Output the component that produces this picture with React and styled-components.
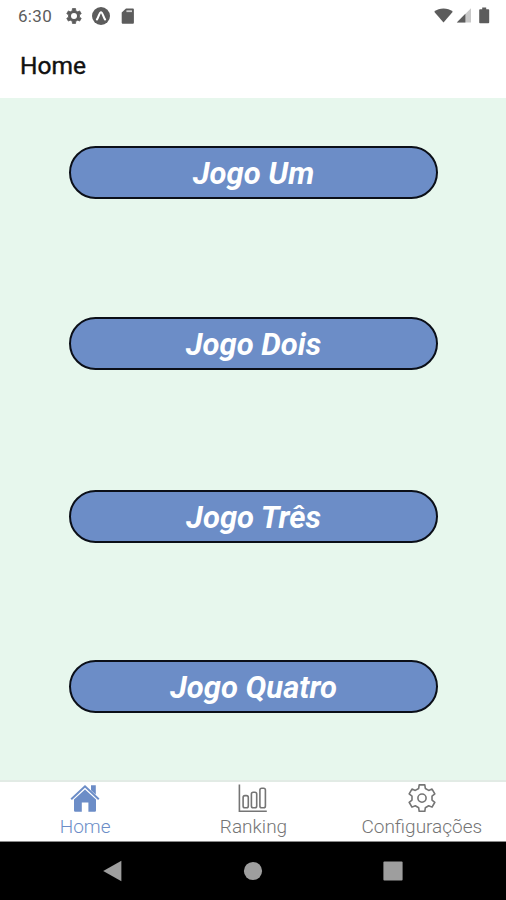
import React, { useState } from 'react';
import styled, { createGlobalStyle } from 'styled-components'

const games = [
  { name: "Jogo Um", gap: 0 },
  { name: "Jogo Dois", gap: 118 },
  { name: "Jogo Três", gap: 120 },
  { name: "Jogo Quatro", gap: 117 },
]

// outline of a six-toothed cog, first tooth pointing up
const cogPath = (cx, cy, outer, inner, tip, base) => {
  const points = []
  for (let i = 0; i < 6; i++) {
    const mid = -90 + i * 60;
    [[inner, -base], [outer, -tip], [outer, tip], [inner, base]].forEach(([r, shift]) => {
      const a = (mid + shift) * Math.PI / 180
      points.push(`${(cx + r * Math.cos(a)).toFixed(2)} ${(cy + r * Math.sin(a)).toFixed(2)}`)
    })
  }
  return `M${points.join('L')}z`
}

const HomeIcon = () => (
  <svg width="30" height="29" viewBox="0 0 30 29">
    <path d="M1.2 15.2 15 2.3l13.8 12.9" fill="none" stroke="currentColor" strokeWidth="2" />
    <path d="M21 1.2h4.8v9.6L21 6.3z" fill="currentColor" />
    <path d="M15 5.4 26 15.6V26.6q0 1.2-1.2 1.2h-6.4V18.6h-6.6v9.2H5.2q-1.2 0-1.2-1.2V15.6z" fill="currentColor" />
  </svg>
)

const RankingIcon = () => (
  <svg width="30" height="29" viewBox="0 0 30 29" fill="none" stroke="currentColor" strokeWidth="1.6">
    <path d="M1.4.6v26.6h27.4" />
    <rect x="5.1" y="11.6" width="5.2" height="12.2" rx="1.8" />
    <rect x="13.4" y="8.2" width="5.3" height="15.6" rx="1.8" />
    <rect x="21.9" y="4.2" width="5.5" height="19.6" rx="1.8" />
  </svg>
)

const SettingsIcon = () => (
  <svg width="30" height="29" viewBox="0 0 30 29" fill="none" stroke="currentColor" strokeWidth="1.6" strokeLinejoin="round">
    <path d={cogPath(15, 14.1, 13.5, 10.2, 12, 19)} />
    <circle cx="15" cy="14.1" r="4.1" />
  </svg>
)

const tabs = [
  { name: "Home", icon: <HomeIcon /> },
  { name: "Ranking", icon: <RankingIcon /> },
  { name: "Configurações", icon: <SettingsIcon /> },
]

const App = () => {
  const [active, setActive] = useState("Home")

  return (
    <Screen>
      <GlobalStyle />
      <StatusBar>
        <Clock>6:30</Clock>
        <StatusIcons $left="13px" $gap="9px">
          <svg width="18" height="18" viewBox="0 0 18 18">
            <path d={cogPath(9, 9, 7.6, 5.6, 12, 18)} fill="currentColor" stroke="currentColor" strokeWidth=".8" strokeLinejoin="round" />
            <circle cx="9" cy="9" r="3" fill="#fff" />
          </svg>
          <svg width="18" height="18" viewBox="0 0 18 18">
            <circle cx="9" cy="9" r="9" fill="currentColor" />
            <path d="M4.9 12.5C6.5 10.6 7.4 5.3 9 5.3s2.5 5.3 4.1 7.2" fill="none" stroke="#fff" strokeWidth="2.1" strokeLinecap="round" />
          </svg>
          <svg width="18" height="18" viewBox="0 0 18 18">
            <path d="M7 1.4h6.6c.8 0 1.3.5 1.3 1.3v12.8c0 .8-.5 1.3-1.3 1.3H4c-.8 0-1.3-.5-1.3-1.3V5.6z" fill="currentColor" />
            <path d="M7.4 4.2h5.6" stroke="#d0d0d0" strokeWidth="1.8" />
          </svg>
        </StatusIcons>
        <StatusIcons $left="auto" $gap="3px">
          <svg width="19" height="18" viewBox="0 0 19 18">
            <path d="M.2 4.8C5.4.4 13.6.4 18.8 4.8L9.5 15.4z" fill="currentColor" />
          </svg>
          <svg width="16" height="18" viewBox="0 0 16 18">
            <path d="M.8 15.4 15 1.2v14.2z" fill="#c9c9c9" />
            <path d="M.8 15.4 9.4 6.8v8.6z" fill="currentColor" />
          </svg>
          <svg width="18" height="18" viewBox="0 0 18 18">
            <path d="M7.2.6h4v1.6h2.2c.4 0 .8.4.8.8v12.4c0 .5-.4.8-.8.8H5c-.4 0-.8-.3-.8-.8V3c0-.4.4-.8.8-.8h2.2z" fill="currentColor" />
          </svg>
        </StatusIcons>
      </StatusBar>
      <Header>Home</Header>
      <GameList>
        {games.map((game) => (
          <GameButton key={game.name} $gap={game.gap}>{game.name}</GameButton>
        ))}
      </GameList>
      <TabBar>
        {tabs.map((tab) => (
          <Tab key={tab.name} $active={tab.name === active} onClick={() => setActive(tab.name)}>
            {tab.icon}
            <span>{tab.name}</span>
          </Tab>
        ))}
      </TabBar>
      <NavBar>
        <svg width="22" height="22" viewBox="0 0 22 22">
          <path d="M1.2 11 19.4.8v20.4z" fill="currentColor" />
        </svg>
        <svg width="22" height="22" viewBox="0 0 22 22">
          <circle cx="11" cy="11" r="9.1" fill="currentColor" />
        </svg>
        <svg width="22" height="22" viewBox="0 0 22 22">
          <rect x="1.4" y="1.4" width="19.2" height="19.2" rx="1" fill="currentColor" />
        </svg>
      </NavBar>
    </Screen>
  )
};

export default App;

const GlobalStyle = createGlobalStyle`
  * {
    box-sizing: border-box;
  }

  body {
    margin: 0;
    font-family: Roboto, sans-serif;
  }
`

const Screen = styled.div`
  width: 506px;
  height: 900px;
  display: flex;
  flex-direction: column;
  overflow: hidden;
  background-color: #fff;
`

const StatusBar = styled.div`
  height: 32px;
  display: flex;
  align-items: center;
  padding: 0 13px 0 18px;
  color: #5c5c5c;
`

const Clock = styled.span`
  font-size: 17px;
  letter-spacing: 0.3px;
`

const StatusIcons = styled.div`
  display: flex;
  align-items: center;
  gap: ${(props) => props.$gap};
  margin-left: ${(props) => props.$left};
`

const Header = styled.header`
  height: 66px;
  padding: 0 20px;
  line-height: 68px;
  font-size: 24.5px;
  font-weight: 400;
  -webkit-text-stroke: 0.4px #111;
  color: #111;
`

const GameList = styled.main`
  flex: 1;
  display: flex;
  flex-direction: column;
  align-items: center;
  padding: 48px 0 0 1px;
  background-color: #e7f7ed;
`

const GameButton = styled.button`
  width: 369px;
  height: 53px;
  margin-top: ${(props) => props.$gap}px;
  padding: 2px 0 0;
  border: 2px solid #0b0f18;
  border-radius: 27px;
  background-color: #6c8dc7;
  color: white;
  font-family: inherit;
  font-size: 31px;
  font-weight: 700;
  font-style: italic;
  cursor: pointer;
`

const TabBar = styled.nav`
  height: 62px;
  display: grid;
  grid-template-columns: repeat(3, 1fr);
  padding-left: 1px;
  border-top: 2px solid #e2ebe5;
  border-bottom: 1px solid #8a8a8a;
`

const Tab = styled.button`
  display: flex;
  flex-direction: column;
  align-items: center;
  gap: 3px;
  padding: 2px 0 0;
  border: none;
  background: none;
  color: ${(props) => (props.$active ? '#6c8dc7' : '#757575')};
  font-family: inherit;
  font-size: 19px;
  font-weight: 300;
  line-height: 22px;
  cursor: pointer;

  svg {
    flex-shrink: 0;
  }
`

const NavBar = styled.div`
  height: 58px;
  display: flex;
  align-items: center;
  justify-content: space-between;
  padding: 0 102px 0 102px;
  background-color: #000;
  color: #9e9e9e;
`
